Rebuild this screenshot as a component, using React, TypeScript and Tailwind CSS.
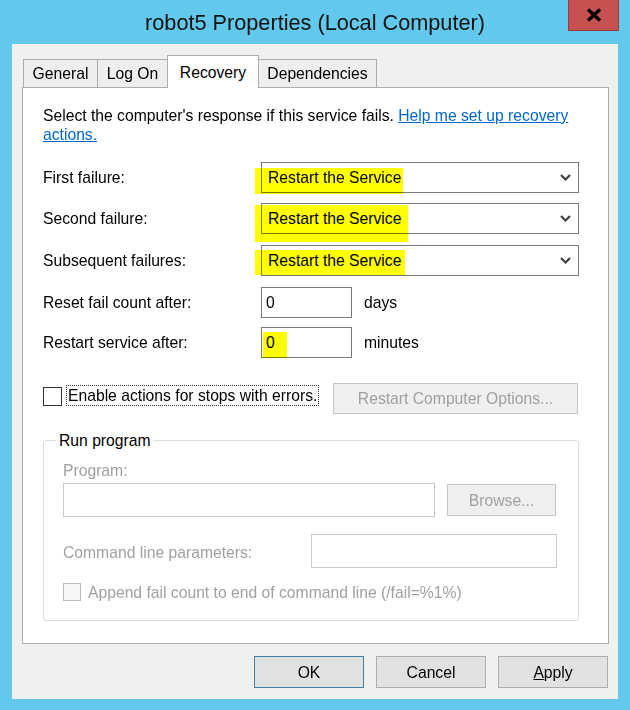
import React from 'react';

const body = 'text-[15.7px] leading-[19px]';

function Chevron() {
  return (
    <svg className="h-[7px] w-[11px]" viewBox="0 0 11 7" fill="none" stroke="#404040" strokeWidth={2.2}>
      <path d="M1 1l4.5 4.5L10 1" />
    </svg>
  );
}

function Combo({ hl }: { hl: string }) {
  return (
    <div className="relative flex h-[31px] w-[318px] items-center justify-between border border-[#7a7a7a] bg-white pl-[6px] pr-[7px]">
      <span>Restart the Service</span>
      <Chevron />
      <span className={`pointer-events-none absolute bg-[#ffff00] mix-blend-multiply ${hl}`} />
    </div>
  );
}

function Row({ label, children }: { label: string; children: React.ReactNode }) {
  return (
    <div className="flex h-[31px] items-center">
      <div className="w-[218px]">{label}</div>
      {children}
    </div>
  );
}

function Tab({ label, active, w }: { label: string; active?: boolean; w: string }) {
  return (
    <div
      className={`-ml-px flex items-center justify-center border border-b-0 border-[#adadad] first:ml-0 ${w} ${
        active ? 'relative z-10 -mb-px h-[33px] bg-white' : 'h-[28px] bg-[#eeeeee]'
      }`}
    >
      {label}
    </div>
  );
}

function DialogButton({ children, primary }: { children: React.ReactNode; primary?: boolean }) {
  return (
    <div
      className={`flex h-[32px] w-[110px] items-center justify-center border bg-[#e1e1e1] ${
        primary ? 'border-[#3c7fb1]' : 'border-[#adadad]'
      }`}
    >
      {children}
    </div>
  );
}

export default function App() {
  return (
    <div className={`h-[710px] w-[630px] overflow-hidden bg-[#62c9ec] font-['Liberation_Sans',Arial,sans-serif] text-black ${body}`}>
      {/* title bar */}
      <div className="relative flex h-[44px] items-center justify-center pt-[1px] text-[21.7px] text-[#111]">
        robot5 Properties (Local Computer)
        <div className="absolute right-[11px] top-0 flex h-[31px] w-[51px] items-center justify-center border border-t-0 border-[#9c3c3c] bg-[#c75050]">
          <svg className="h-[14px] w-[16px]" viewBox="0 0 16 14" stroke="#000" strokeWidth={3.4}>
            <path d="M2 1.5l12 11M14 1.5l-12 11" />
          </svg>
        </div>
      </div>

      {/* client area */}
      <div className="mx-[12px] flex h-[655px] flex-col bg-[#f0f0f0]">
        <div className="flex h-[43px] items-end pl-[11px] pt-[11px]">
          <Tab label="General" w="w-[75px]" />
          <Tab label="Log On" w="w-[71px]" />
          <Tab label="Recovery" w="w-[92px]" active />
          <Tab label="Dependencies" w="w-[119px]" />
        </div>

        <div className="ml-[10px] h-[557px] w-[587px] border border-[#adadad] bg-white pl-[20px] pt-[18px]">
          <p>
            Select the computer&apos;s response if this service fails.{' '}
            <span className="text-[#0066cc] underline">
              Help me set up recovery
              <br />
              actions.
            </span>
          </p>

          <div className="mt-[18px]">
            <Row label="First failure:">
              <Combo hl="-left-[7px] top-[5px] h-[26px] w-[148px]" />
            </Row>
          </div>
          <div className="mt-[10px]">
            <Row label="Second failure:">
              <Combo hl="-left-[7px] top-[1px] h-[37px] w-[153px]" />
            </Row>
          </div>
          <div className="mt-[11px]">
            <Row label="Subsequent failures:">
              <Combo hl="-left-[7px] top-[4px] h-[25px] w-[150px]" />
            </Row>
          </div>
          <div className="mt-[11px]">
            <Row label="Reset fail count after:">
              <div className="flex h-[31px] w-[91px] items-center border border-[#7a7a7a] bg-white pl-[4px]">0</div>
              <span className="ml-[12px]">days</span>
            </Row>
          </div>
          <div className="mt-[9px]">
            <Row label="Restart service after:">
              <div className="relative flex h-[31px] w-[91px] items-center border border-[#7a7a7a] bg-white pl-[4px]">
                0
                <span className="pointer-events-none absolute left-[1px] top-[4px] h-[26px] w-[24px] bg-[#ffff00] mix-blend-multiply" />
              </div>
              <span className="ml-[12px]">minutes</span>
            </Row>
          </div>

          {/* stop with errors */}
          <div className="mt-[25px] flex h-[31px] w-[535px]">
            <div className="mt-[4px] h-[19px] w-[19px] border border-[#333333] bg-white" />
            <div className="ml-[4px] mt-[2px] flex h-[21px] items-center border border-dotted border-[#333] px-[1px]">
              Enable actions for stops with errors.
            </div>
            <div className="ml-auto flex h-[31px] w-[245px] items-center justify-center border border-[#c4c4c4] bg-[#efefef] text-[#a0a0a0]">
              Restart Computer Options...
            </div>
          </div>

          {/* run program group */}
          <div className="relative mt-[26px] h-[181px] w-[536px] rounded-[3px] border border-[#dcdcdc] pl-[19px] pt-[20px]">
            <span className="absolute -top-[10px] left-[12px] bg-white px-[3px]">Run program</span>
            <div className="text-[#a0a0a0]">Program:</div>
            <div className="mt-[3px] flex h-[34px] items-center">
              <div className="h-[34px] w-[372px] border border-[#cacaca] bg-white" />
              <div className="ml-[12px] flex h-[32px] w-[109px] items-center justify-center border border-[#c4c4c4] bg-[#efefef] text-[#a0a0a0]">
                Browse...
              </div>
            </div>
            <div className="mt-[17px] flex h-[34px] items-center">
              <div className="w-[248px] pt-[3px] text-[#a0a0a0]">Command line parameters:</div>
              <div className="h-[34px] w-[246px] border border-[#cacaca] bg-white" />
            </div>
            <div className="mt-[15px] flex h-[18px] items-center">
              <div className="h-[18px] w-[18px] border border-[#bcbcbc] bg-[#f7f7f7]" />
              <span className="ml-[7px] text-[#a0a0a0]">Append fail count to end of command line (/fail=%1%)</span>
            </div>
          </div>
        </div>

        {/* dialog buttons */}
        <div className="mt-[12px] flex justify-end gap-[12px] pr-[10px]">
          <DialogButton primary>OK</DialogButton>
          <DialogButton>Cancel</DialogButton>
          <DialogButton>
            <span>
              <span className="underline">A</span>pply
            </span>
          </DialogButton>
        </div>
      </div>
    </div>
  );
}
